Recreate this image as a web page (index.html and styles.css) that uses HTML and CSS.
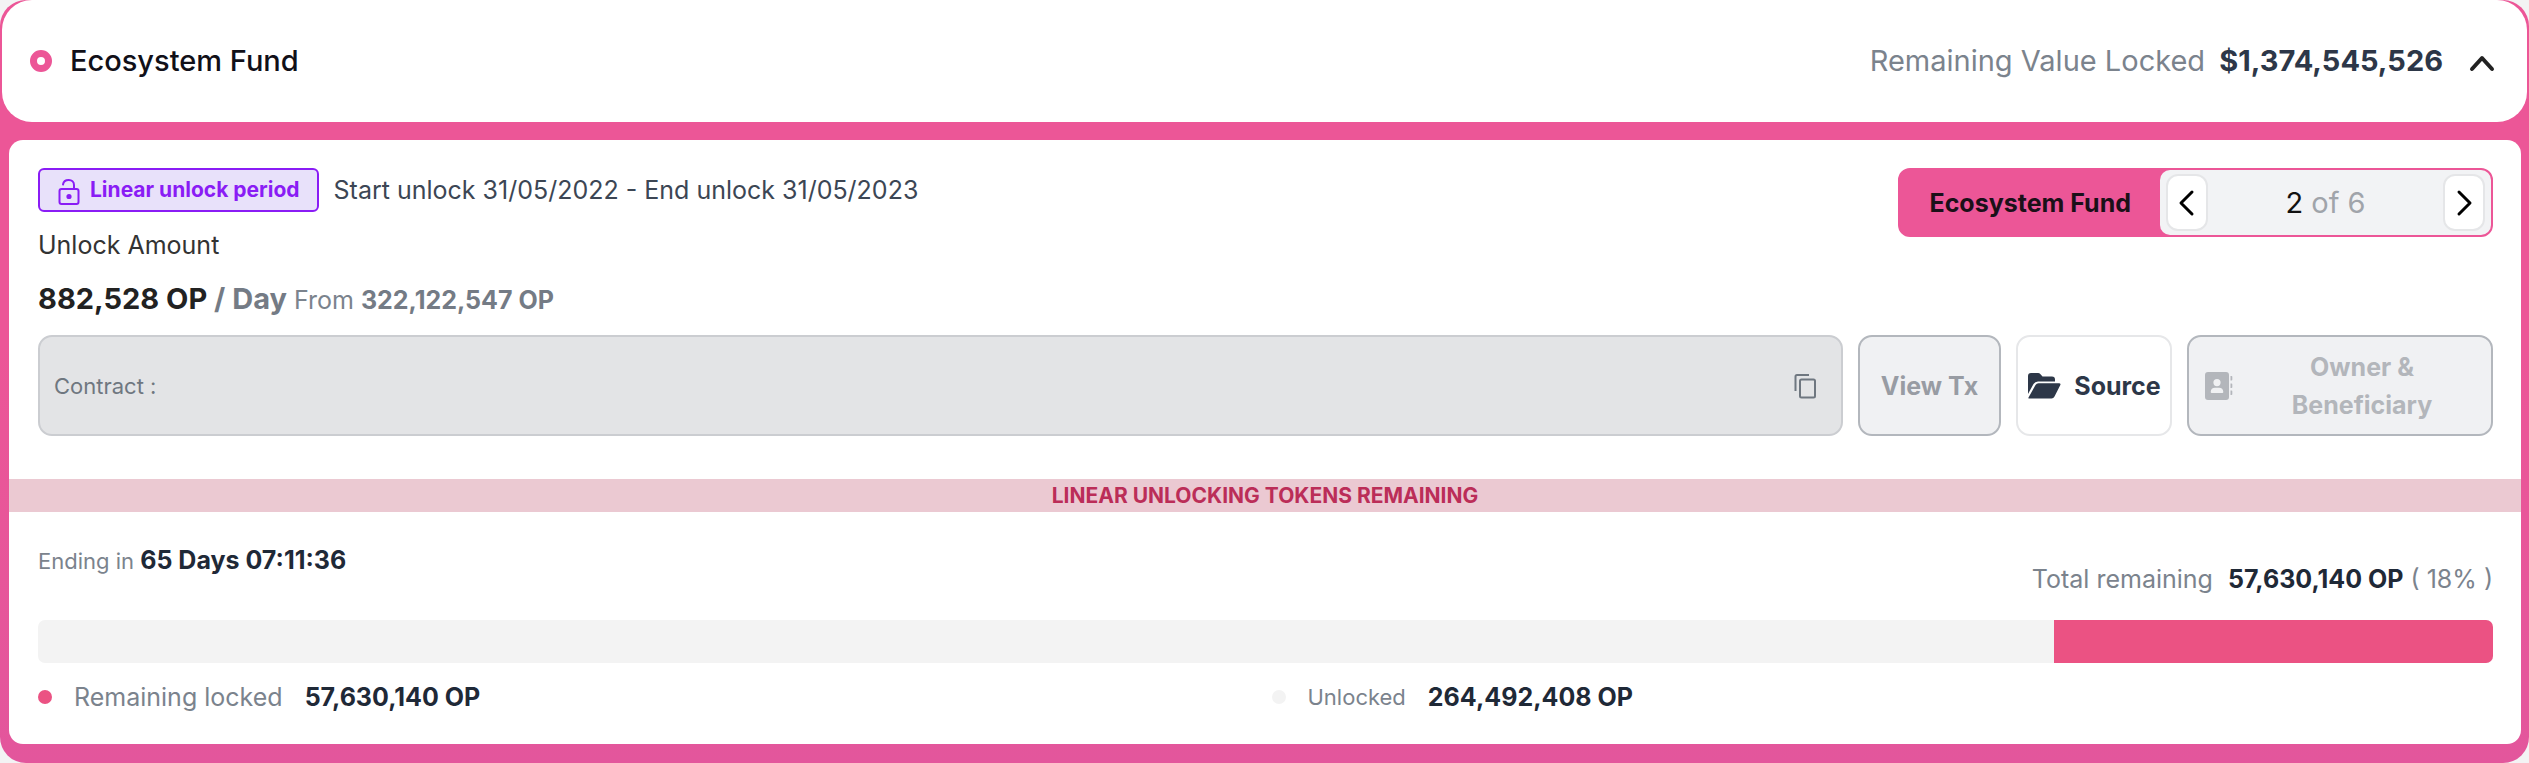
FILE: index.html
```html
<!doctype html>
<html lang="en">

<head>
    <meta charset="utf-8">
    <meta name="viewport" content="width=device-width, initial-scale=1">
    <title>Ecosystem Fund</title>
    <link rel="stylesheet" href="styles.css">
</head>

<body>
    <section class="fund">
        <header class="fund-header">
            <span class="ring"></span>
            <h1 class="fund-name">Ecosystem Fund</h1>
            <p class="locked-value">Remaining Value Locked <strong>$1,374,545,526</strong></p>
            <button class="toggle" type="button" aria-label="Collapse">
                <svg width="26" height="18" viewBox="0 0 26 18" fill="none" stroke="#222" stroke-width="4" stroke-linecap="round" stroke-linejoin="round">
                    <path d="M3 15 13 4l10 11" />
                </svg>
            </button>
        </header>

        <div class="card">
            <div class="card-top">
                <div class="info">
                    <div class="period">
                        <span class="badge">
                            <svg width="22" height="28" viewBox="0 0 22 28" fill="none" stroke="#8a1cf5" stroke-width="2" stroke-linecap="round" stroke-linejoin="round">
                                <path d="M5 6.500C6 .5 16 .5 16 7v4" />
                                <rect x="1.500" y="11" width="19" height="15" rx="2" />
                                <circle cx="11" cy="18.500" r="1.600" fill="#8a1cf5" />
                            </svg>
                            Linear unlock period
                        </span>
                        <span class="dates">Start unlock 31/05/2022 - End unlock 31/05/2023</span>
                    </div>
                    <p class="label">Unlock Amount</p>
                    <p class="amount">
                        <strong>882,528 OP <span>/ Day</span></strong>
                        <span class="from">From <b>322,122,547 OP</b></span>
                    </p>
                </div>
                <nav class="pager" aria-label="Ecosystem Fund">
                    <span class="pager-title">Ecosystem Fund</span>
                    <div class="pager-nav">
                        <button type="button" aria-label="Previous">
                            <svg width="18" height="28" viewBox="0 0 18 28" fill="none" stroke="#000" stroke-width="3" stroke-linecap="round" stroke-linejoin="round">
                                <path d="M14 3 3 14l11 11" />
                            </svg>
                        </button>
                        <span class="page">2 <span>of 6</span></span>
                        <button type="button" aria-label="Next">
                            <svg width="18" height="28" viewBox="0 0 18 28" fill="none" stroke="#000" stroke-width="3" stroke-linecap="round" stroke-linejoin="round">
                                <path d="m4 3 11 11L4 25" />
                            </svg>
                        </button>
                    </div>
                </nav>
            </div>

            <div class="actions">
                <div class="contract">
                    <span>Contract :</span>
                    <button type="button" class="copy" aria-label="Copy contract">
                        <svg width="22" height="26" viewBox="0 0 22 26" fill="none" stroke="#6f7780" stroke-width="2" stroke-linejoin="round">
                            <path d="M1.500 18V3.500q0-1.500 1.500-1.500H15" />
                            <rect x="6" y="6.500" width="15" height="18" rx="1.500" />
                        </svg>
                    </button>
                </div>
                <button type="button" class="btn btn-tx" disabled>View Tx</button>
                <button type="button" class="btn btn-source">
                    <svg width="34" height="28" viewBox="0 0 34 28" fill="#2d3748">
                        <path d="M1 22V4q0-3 3-3h7q1.500 0 2.500 1.200L15.500 4.500H25q3 0 3 3V9.500H11q-3 0-4.500 2.500Z" />
                        <path d="M1.500 25.500 8.500 13q1-1.800 3-1.800H32q2.200 0 1.200 2L27.500 24.500Q26.500 26.500 24.500 26.500H2.300q-1.300 0-.8-1Z" />
                    </svg>
                    Source
                </button>
                <button type="button" class="btn btn-owner" disabled>
                    <svg width="28" height="30" viewBox="0 0 28 30" fill="#b3b6bb">
                        <path fill-rule="evenodd" d="M3 1h18q3 0 3 3v22q0 3-3 3H3q-3 0-3-3V4q0-3 3-3ZM12 8a3.600 3.600 0 1 0 0 7.200A3.600 3.600 0 0 0 12 8ZM10 16.800q-4 0-4.300 4.200 0 1 1 1h10.600q1 0 1-1-.3-4.200-4.300-4.200Z" />
                        <path d="M25.500 5h1q.8 0 .8.800v3q0 .8-.8.800h-1ZM25.500 12.500h1q.8 0 .8.800v3q0 .8-.8.800h-1ZM25.500 19.500h1q.8 0 .8.800v3q0 .8-.8.800h-1Z" />
                    </svg>
                    <span>Owner &amp;<br>Beneficiary</span>
                </button>
            </div>

            <h2 class="band">LINEAR UNLOCKING TOKENS REMAINING</h2>

            <div class="summary">
                <p class="ending">Ending in <strong>65 Days 07:11:36</strong></p>
                <p class="total">Total remaining <strong>57,630,140 OP</strong> ( 18% )</p>
            </div>

            <div class="bar">
                <div class="bar-locked" style="width: 17.9%"></div>
            </div>

            <div class="legend">
                <p><i class="dot dot-locked"></i>Remaining locked<strong>57,630,140 OP</strong></p>
                <p class="unlocked"><i class="dot"></i>Unlocked<strong>264,492,408 OP</strong></p>
            </div>
        </div>
    </section>
</body>

</html>
```
FILE: styles.css
```css
* {
    box-sizing: border-box;
    margin: 0;
}

body {
    background: #f3f3f4;
    color: #7b838d;
    font-family: Inter, "Liberation Sans", sans-serif;
    font-size: 25px;
    line-height: 38px;
}

button {
    font: inherit;
    color: inherit;
    border: 0;
    background: none;
    padding: 0;
    cursor: pointer;
}

button:disabled {
    cursor: default;
}

svg {
    display: block;
    flex: none;
}

/* the pink shows as a thin rim round the header corners */
.fund {
    background: linear-gradient(#ec5697 45%, #e3569c);
    border-radius: 26px;
    padding: 0 2px 19px;
}

/* header */
.fund-header {
    display: flex;
    align-items: center;
    height: 122px;
    padding: 0 32px 0 28px;
    background: #fff;
    border-radius: 30px;
    font-size: 29px;
}

.ring {
    width: 22px;
    height: 22px;
    margin-right: 18px;
    border: 7px solid #ec5697;
    border-radius: 50%;
}

.fund-name {
    flex: 1;
    font-size: 29px;
    font-weight: 500;
    color: #111018;
}

.locked-value strong {
    margin-left: 6px;
    font-weight: 700;
    color: #2d3748;
}

.toggle {
    margin-left: 26px;
    padding-top: 4px;
}

/* card */
.card {
    margin: 18px 6px 0 7px;
    padding: 28px 0;
    background: #fff;
    border-radius: 14px;
}

.card-top,
.actions,
.summary,
.legend {
    display: flex;
    padding: 0 28px 0 29px;
}

.bar {
    margin: 0 28px 0 29px;
}

.card-top {
    justify-content: space-between;
    align-items: flex-start;
}

.period {
    display: flex;
    align-items: center;
    gap: 15px;
}

.badge {
    display: flex;
    align-items: center;
    gap: 10px;
    height: 44px;
    padding: 0 17px 0 18px;
    border: 2px solid #8a1cf5;
    border-radius: 6px;
    background: #e8e1fa;
    color: #8a1cf5;
    font-size: 21px;
    font-weight: 700;
}

.badge svg {
    margin-top: 4px;
}

.dates {
    color: #3c4654;
}

.label {
    margin-top: 14px;
    color: #333;
}

.amount {
    margin-top: 16px;
}

.amount strong {
    font-size: 29px;
    font-weight: 700;
    color: #222;
}

.amount strong span,
.amount b {
    color: #747b85;
}

.pager {
    display: flex;
    height: 69px;
    border: 2px solid #ec5697;
    border-radius: 12px;
    background: #ec5697;
}

.pager-title {
    align-self: center;
    padding: 0 29px;
    color: #1b1018;
    font-weight: 700;
}

.pager-nav {
    display: flex;
    justify-content: space-between;
    align-items: center;
    width: 331px;
    padding: 0 6px;
    background: #f2f3f5;
    border-radius: 10px;
}

.pager-nav button {
    display: flex;
    align-items: center;
    justify-content: center;
    width: 42px;
    height: 57px;
    background: #fff;
    border: 2px solid #e5e6e8;
    border-radius: 12px;
}

.page {
    color: #111;
    font-size: 29px;
}

.page span {
    color: #a0a4aa;
}

/* contract row */
.actions {
    gap: 15px;
    margin-top: 16px;
}

.contract {
    flex: 1;
    display: flex;
    align-items: center;
    justify-content: space-between;
    height: 101px;
    padding: 0 25px 0 14px;
    border: 2px solid #cbcdd1;
    border-radius: 14px;
    background: #e3e4e6;
    color: #6f7780;
    font-size: 22px;
}

.btn {
    display: flex;
    align-items: center;
    justify-content: center;
    height: 101px;
    border: 2px solid #b3b7bd;
    border-radius: 14px;
    background: #f0f1f3;
    font-weight: 700;
}

.btn-tx {
    width: 143px;
    color: #989ca3;
}

.btn-source {
    width: 156px;
    gap: 13px;
    border-color: #e6e7e9;
    background: #fff;
    color: #2d3748;
}

.btn-owner {
    width: 306px;
    padding: 0 16px;
    color: #b3b6bb;
}

.btn-owner span {
    flex: 1;
    padding-left: 16px;
}

.band {
    margin-top: 43px;
    background: #ebc9d2;
    color: #bb2d58;
    font-size: 21px;
    font-weight: 700;
    line-height: 33px;
    text-align: center;
}

/* remaining tokens */
.summary {
    justify-content: space-between;
    margin-top: 29px;
}

.ending {
    font-size: 22px;
}

.summary strong,
.legend strong {
    color: #1f2937;
    font-size: 25px;
    font-weight: 700;
}

.total {
    margin-top: 19px;
}

.total strong {
    margin-left: 8px;
}

.bar {
    display: flex;
    justify-content: flex-end;
    height: 43px;
    margin-top: 22px;
    border-radius: 7px;
    background: #f3f3f3;
    overflow: hidden;
}

.bar-locked {
    background: #eb5283;
}

.legend {
    margin-top: 15px;
}

.legend p {
    flex: 1;
    display: flex;
    align-items: center;
}

.legend strong {
    margin-left: 22px;
}

.legend .unlocked {
    padding-left: 12px;
    font-size: 22px;
}

.dot {
    width: 14px;
    height: 14px;
    margin-right: 22px;
    border-radius: 50%;
    background: #f3f3f3;
}

.dot-locked {
    background: #eb5283;
}
```
